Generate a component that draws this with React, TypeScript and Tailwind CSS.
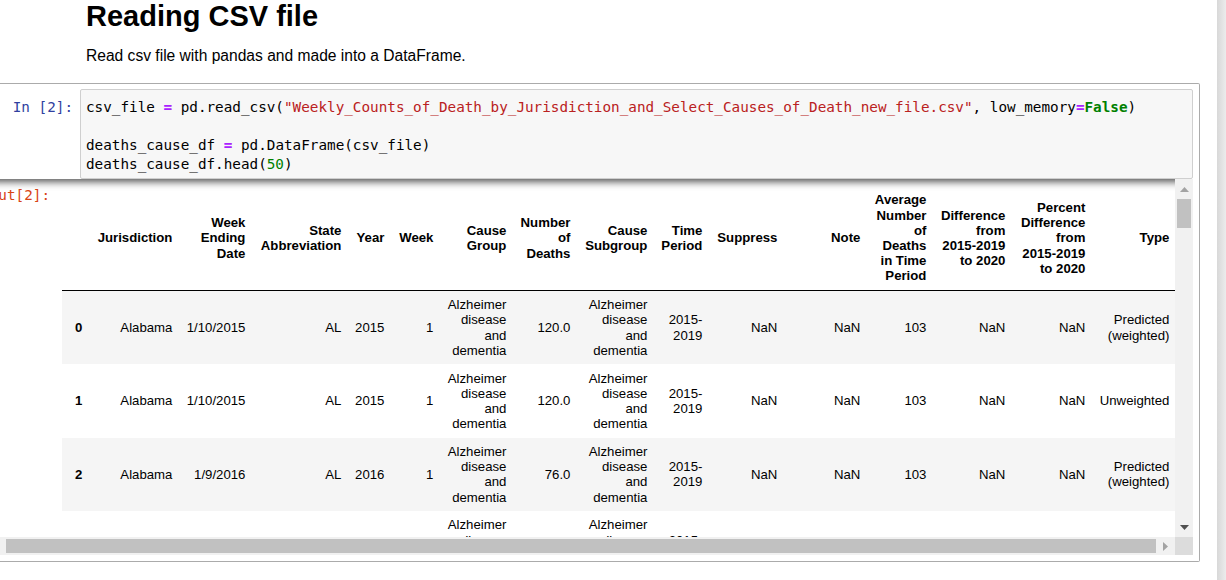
import React from 'react';

const colWidths = [
  'w-[27px]', 'w-[90px]', 'w-[73px]', 'w-[96px]', 'w-[43px]', 'w-[49px]', 'w-[73px]', 'w-[64px]',
  'w-[77px]', 'w-[55px]', 'w-[75px]', 'w-[83px]', 'w-[66px]', 'w-[79px]', 'w-[80px]', 'w-[84px]',
];

const headers = [
  '',
  'Jurisdiction',
  'Week\nEnding\nDate',
  'State\nAbbreviation',
  'Year',
  'Week',
  'Cause\nGroup',
  'Number\nof\nDeaths',
  'Cause\nSubgroup',
  'Time\nPeriod',
  'Suppress',
  'Note',
  'Average\nNumber\nof\nDeaths\nin Time\nPeriod',
  'Difference\nfrom\n2015-2019\nto 2020',
  'Percent\nDifference\nfrom\n2015-2019\nto 2020',
  'Type',
];

const alz = 'Alzheimer\ndisease\nand\ndementia';

const rows: string[][] = [
  ['Alabama', '1/10/2015', 'AL', '2015', '1', alz, '120.0', alz, '2015-\n2019', 'NaN', 'NaN', '103', 'NaN', 'NaN', 'Predicted\n(weighted)'],
  ['Alabama', '1/10/2015', 'AL', '2015', '1', alz, '120.0', alz, '2015-\n2019', 'NaN', 'NaN', '103', 'NaN', 'NaN', 'Unweighted'],
  ['Alabama', '1/9/2016', 'AL', '2016', '1', alz, '76.0', alz, '2015-\n2019', 'NaN', 'NaN', '103', 'NaN', 'NaN', 'Predicted\n(weighted)'],
  ['Alabama', '1/9/2016', 'AL', '2016', '1', alz, '76.0', alz, '2015-\n2019', 'NaN', 'NaN', '103', 'NaN', 'NaN', 'Unweighted'],
];

const cellCls = 'px-[6.6px] py-[6.3px] text-right align-middle whitespace-pre-line';

function Op({ children }: { children: React.ReactNode }) {
  return <span className="text-[#aa22ff] font-bold">{children}</span>;
}

function Arrow({ dir, color }: { dir: 'up' | 'down' | 'right'; color: string }) {
  if (dir === 'right') {
    return (
      <svg width="5" height="9" viewBox="0 0 5 9">
        <path d="M0 0 L5 4.5 L0 9 Z" fill={color} />
      </svg>
    );
  }
  return (
    <svg width="9" height="5" viewBox="0 0 9 5">
      <path d={dir === 'up' ? 'M0 5 L4.5 0 L9 5 Z' : 'M0 0 L9 0 L4.5 5 Z'} fill={color} />
    </svg>
  );
}

function DataTable() {
  return (
    <table className="w-[1114px] table-fixed border-collapse text-[13.2px] leading-[15.2px] text-black">
      <colgroup>
        {colWidths.map((w, i) => (
          <col key={i} className={w} />
        ))}
      </colgroup>
      <thead>
        <tr>
          {headers.map((h, i) => (
            <th key={i} className={`${cellCls} font-bold border-b border-black`}>
              {h}
            </th>
          ))}
        </tr>
      </thead>
      <tbody>
        {rows.map((row, r) => (
          <tr key={r} className={r % 2 === 0 ? 'bg-[#f5f5f5]' : 'bg-white'}>
            <th className={`${cellCls} font-bold`}>{r}</th>
            {row.map((c, i) => (
              <td key={i} className={`${cellCls} font-normal`}>
                {c}
              </td>
            ))}
          </tr>
        ))}
      </tbody>
    </table>
  );
}

export default function App() {
  return (
    <div className="w-[1226px] h-[580px] overflow-hidden bg-white flex font-['Liberation_Sans',Arial,sans-serif] text-black">
      <div className="w-[1217px] flex flex-col">
        {/* markdown cell */}
        <h1 className="pl-[86px] text-[29px] font-bold leading-[33px]">Reading CSV file</h1>
        <p className="mt-[12px] pl-[86px] text-[15.6px] leading-[22px]">
          Read csv file with pandas and made into a DataFrame.
        </p>

        {/* code cell */}
        <div className="mt-[16px] -ml-[20px] w-[1220px] border-t border-r border-b border-[#ababab] rounded-r-[2px] pt-[5px] pr-[6px] pb-[6px]">
          <div className="flex font-['DejaVu_Sans_Mono',monospace] text-[14.3px] leading-[19px]">
            <div className="w-[100px] shrink-0 text-right pr-[7px] pt-[9px] text-[#303f9f] whitespace-pre">In [2]:</div>
            <div className="flex-1 h-[90px] border border-[#cfcfcf] rounded-[2px] bg-[#f7f7f7] px-[5px] pt-[8px] pb-[4px] whitespace-pre overflow-hidden">
              <div>
                csv_file <Op>=</Op> pd.read_csv(
                <span className="text-[#ba2121]">"Weekly_Counts_of_Death_by_Jurisdiction_and_Select_Causes_of_Death_new_file.csv"</span>
                , low_memory<Op>=</Op>
                <span className="text-[#008000] font-bold">False</span>)
              </div>
              <div className="h-[19px]" />
              <div>
                deaths_cause_df <Op>=</Op> pd.DataFrame(csv_file)
              </div>
              <div>
                deaths_cause_df.head(<span className="text-[#008000]">50</span>)
              </div>
            </div>
          </div>

          {/* scrolled output */}
          <div className="flex flex-col h-[376px] shadow-[inset_0_2px_8px_rgba(0,0,0,0.8)]">
            <div className="flex h-[358px]">
              <div className="flex-1 flex overflow-hidden">
                <div className="w-[76px] shrink-0 flex justify-end overflow-hidden pr-[6px] pt-[7px] font-['DejaVu_Sans_Mono',monospace] text-[14.3px] leading-[19px] text-[#d84315] whitespace-nowrap">
                  <span>Out[2]:</span>
                </div>
                <div className="pt-[7px] pl-[6px]">
                  <DataTable />
                </div>
              </div>
              <div className="w-[18px] shrink-0 bg-[#f1f1f1] flex flex-col items-center">
                <div className="h-[20px] flex items-center justify-center">
                  <Arrow dir="up" color="#a3a3a3" />
                </div>
                <div className="w-[14px] h-[29px] bg-[#c1c1c1]" />
                <div className="flex-1" />
                <div className="h-[20px] flex items-center justify-center">
                  <Arrow dir="down" color="#505050" />
                </div>
              </div>
            </div>
            <div className="flex h-[18px]">
              <div className="flex-1 bg-[#f1f1f1] flex items-center">
                <div className="w-[26px] shrink-0" />
                <div className="flex-1 h-[14px] bg-[#c1c1c1]" />
                <div className="w-[19px] shrink-0 flex items-center justify-center">
                  <Arrow dir="right" color="#a3a3a3" />
                </div>
              </div>
              <div className="w-[18px] shrink-0 bg-[#dcdcdc]" />
            </div>
          </div>
        </div>
      </div>
      <div className="w-[9px] bg-linear-to-r from-[#d8d8d8] to-[#ececec]" />
    </div>
  );
}
